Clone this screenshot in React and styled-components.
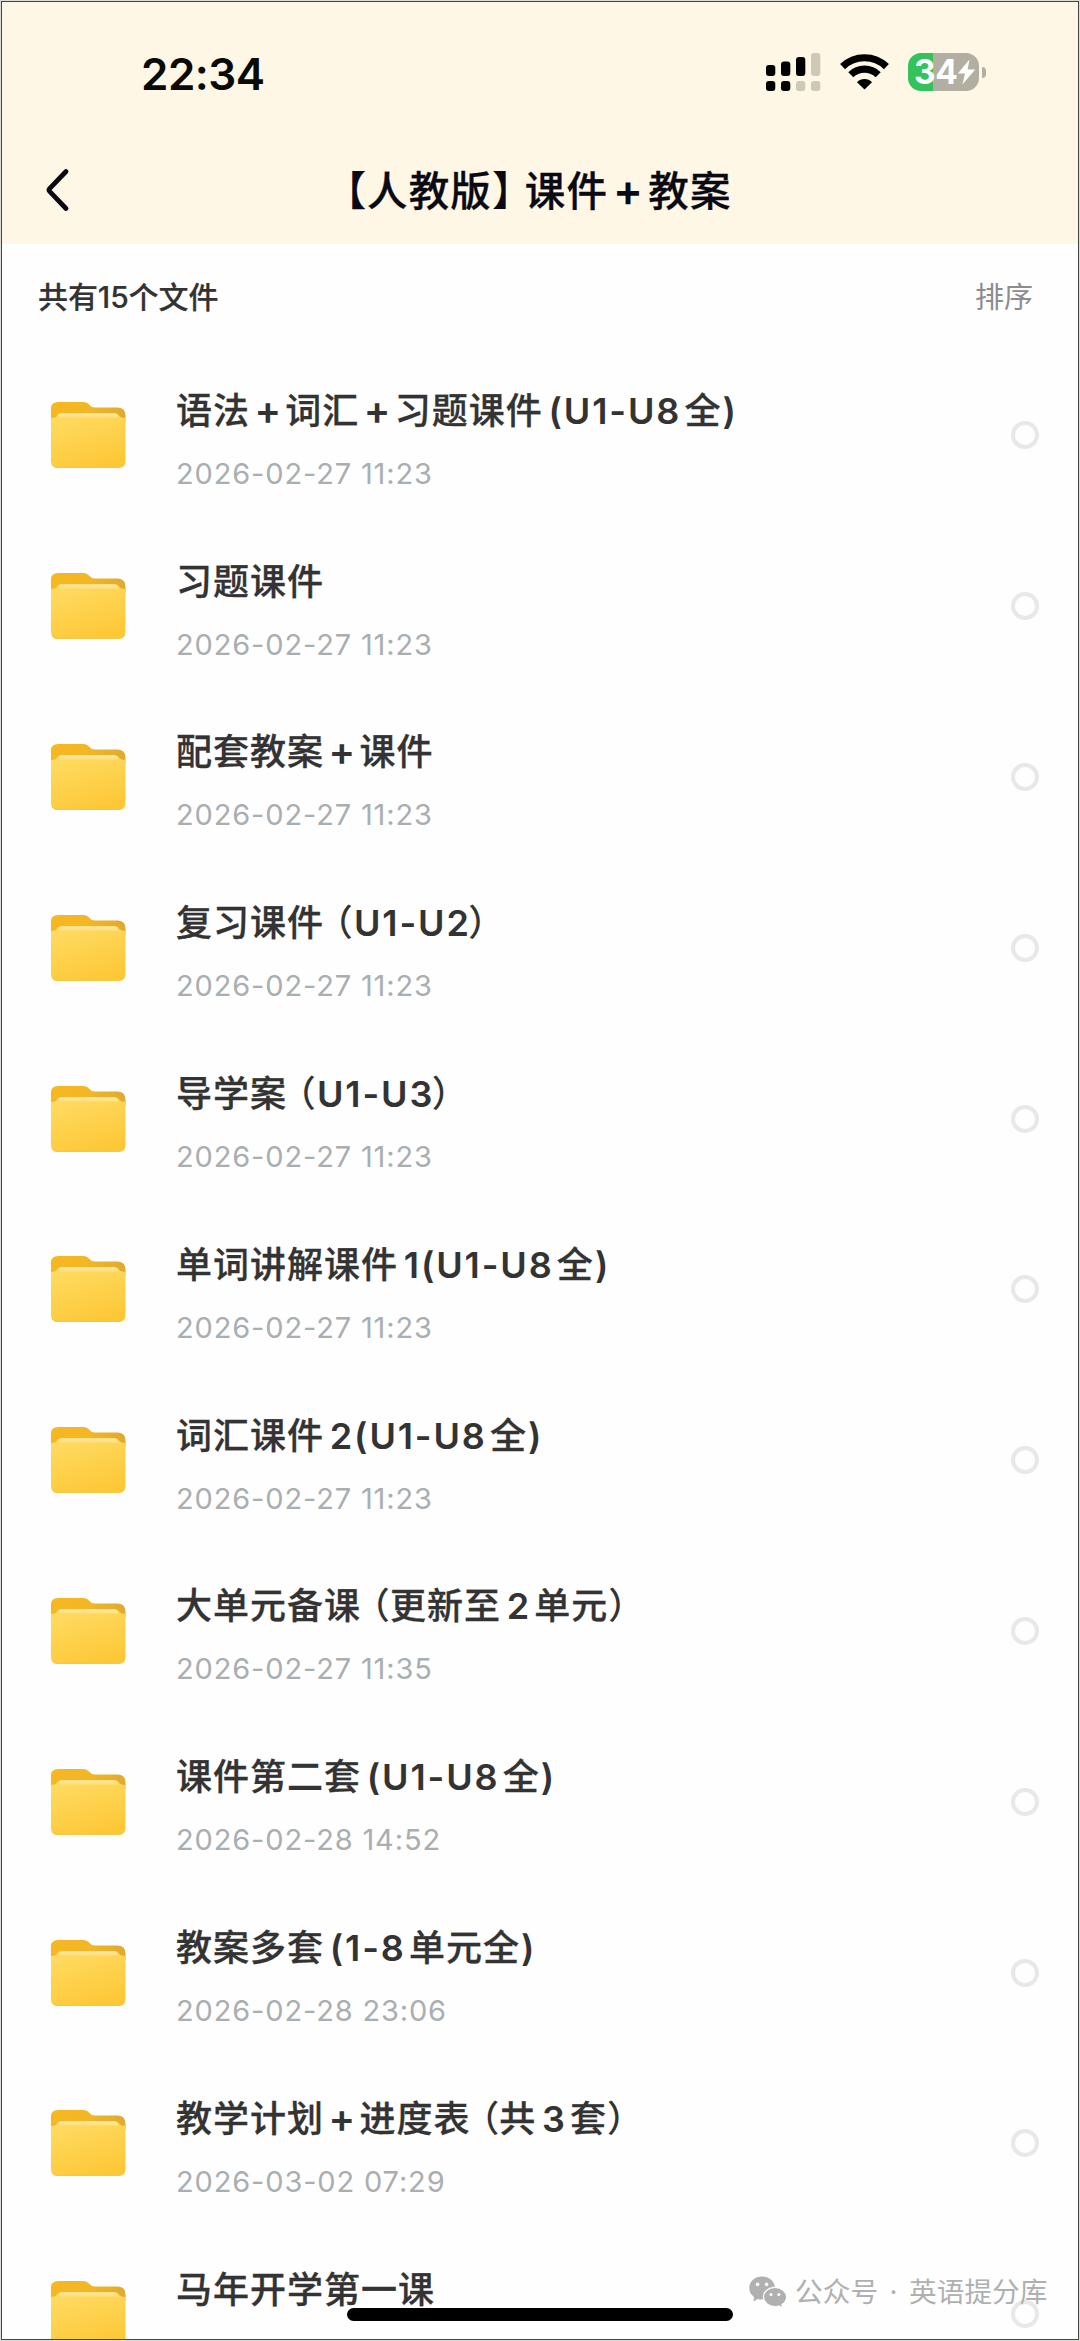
import React from "react";
import styled, { createGlobalStyle, css } from "styled-components";

const GlobalStyle = createGlobalStyle`
  * { box-sizing: border-box; }
  body { margin: 0; background: #dcdad0; }
`;

const cjk = `"Noto Sans CJK SC", sans-serif`;
const latin = `Inter, "Noto Sans CJK SC", sans-serif`;

const Screen = styled.div`
  position: relative;
  width: 1080px;
  height: 2341px;
  padding: 1px;
  overflow: hidden;
  background: #dcdcd8;
`;

const Frame = styled.main`
  display: flex;
  flex-direction: column;
  width: 1078px;
  height: 2339px;
  overflow: hidden;
  border: 1px solid #45453f;
  background: #fefefe;
  font-family: ${latin};
`;

const Header = styled.header`
  flex: none;
  height: 242px;
  background: #fff7e5;
`;

const StatusBar = styled.div`
  display: flex;
  align-items: center;
  justify-content: space-between;
  height: 140px;
  padding: 0 92px 0 139px;
`;

const Clock = styled.time`
  padding-top: 3px;
  font-size: 44px;
  font-weight: 600;
  line-height: 50px;
  letter-spacing: -0.5px;
  color: #0a0a06;
`;

const StatusIcons = styled.div`
  display: flex;
  align-items: center;
  gap: 19px;
`;

const Battery = styled.div`
  display: flex;
  align-items: center;
  gap: 3px;
`;

const BatteryBody = styled.div`
  display: flex;
  align-items: center;
  width: 71px;
  height: 38px;
  padding-left: 6px;
  border-radius: 13px;
  background: linear-gradient(90deg, #34c25c 0 25px, #b2afa2 25px);
  color: #fff;
  font-size: 33.5px;
  font-weight: 700;
  line-height: 38px;
  letter-spacing: -0.4px;
`;

const BatteryTip = styled.div`
  width: 4px;
  height: 11px;
  border-radius: 0 5px 5px 0;
  background: #b2afa2;
`;

const NavBar = styled.nav`
  display: grid;
  grid-template-columns: 110px 1fr 133px;
  align-items: center;
  height: 96px;
`;

const BackButton = styled.button`
  display: flex;
  width: 34px;
  margin-left: 39px;
  padding: 0;
  border: 0;
  background: none;
`;

const Heading = styled.h1`
  display: flex;
  align-items: baseline;
  justify-content: center;
  margin: 0;
  padding-bottom: 2px;
  font-size: 40.5px;
  font-weight: 500;
  line-height: 56px;
  letter-spacing: 0.01em;
  color: #0a0a14;
`;

const Summary = styled.div`
  display: flex;
  align-items: center;
  justify-content: space-between;
  flex: none;
  height: 106px;
  padding: 0 45px 4px 36px;
`;

const Count = styled.span`
  font-family: ${latin};
  font-size: 30px;
  font-weight: 500;
  letter-spacing: -0.1px;
  color: #333;
  -webkit-text-stroke: 0.2px #333;
`;

const Sort = styled.button`
  padding: 0;
  border: 0;
  background: none;
  font-family: ${cjk};
  font-size: 29px;
  line-height: 42px;
  color: #8c8c8c;
`;

const List = styled.ul`
  flex: none;
  margin: 0;
  padding: 0;
  list-style: none;
`;

const Row = styled.li`
  display: grid;
  grid-template-columns: 127px 1fr 28px;
  align-items: center;
  height: 170.8px;
  padding: 0 39px 0 47px;
`;

const Info = styled.div`
  display: flex;
  flex-direction: column;
  padding-top: 2px;
`;

const Name = styled.div`
  display: flex;
  align-items: baseline;
  height: 54px;
  font-size: 36px;
  font-weight: 500;
  line-height: 54px;
  white-space: pre;
  color: #333;
`;

const Stamp = styled.time`
  height: 36px;
  margin-top: 21px;
  font-size: 29px;
  font-weight: 400;
  line-height: 36px;
  letter-spacing: 0.85px;
  white-space: pre;
  color: #a9aeb1;
`;

const partStyles = {
  han: css`
    font-family: ${cjk};
    letter-spacing: 0.028em;
    -webkit-text-stroke: 0.3px currentColor;
  `,
  latin: css`
    font-family: ${latin};
    font-weight: 600;
    letter-spacing: 0.052em;
    margin-left: ${(p) => (p.$tightStart ? "0.03em" : "0.16em")};
    margin-right: ${(p) => (p.$tightEnd ? "-0.07em" : "0.09em")};
  `,
  plus: css`
    font-family: ${latin};
    font-size: 1.1em;
    font-weight: 600;
    line-height: 1;
    margin: 0 0.11em;
  `,
  open: css`
    font-family: ${cjk};
    margin-left: -0.2em;
  `,
  close: css`
    font-family: ${cjk};
  `,
  bracket: css`
    font-family: ${cjk};
    margin-right: -0.2em;
  `,
};

const Part = styled.span`
  ${(p) => partStyles[p.$kind]}
`;

const Radio = styled.span`
  width: 28px;
  height: 28px;
  border: 4px solid #e8e8e8;
  border-radius: 50%;
`;

const HomeIndicator = styled.div`
  position: absolute;
  left: 347px;
  top: 2308px;
  width: 386px;
  height: 12.5px;
  border-radius: 7px;
  background: #000;
`;

const Watermark = styled.div`
  position: absolute;
  left: 749px;
  top: 2271px;
  display: flex;
  align-items: center;
  gap: 8px;
  height: 42px;
  font-family: ${latin};
  font-size: 27.7px;
  line-height: 42px;
  word-spacing: 3.7px;
  white-space: pre;
  color: #b0b0b0;
`;

function kindOf(text) {
  if (text === "+") return "plus";
  if (text === "（") return "open";
  if (text === "）") return "close";
  if (text === "】") return "bracket";
  return /^[\x20-\x7e]/.test(text) ? "latin" : "han";
}

function MixedText({ text }) {
  const parts = text.match(/\+|（|）|】|[\x20-\x2a\x2c-\x7e]+|[^\x20-\x7e（）】]+/g);
  return parts.map((part, i) => (
    <Part
      key={i}
      $kind={kindOf(part)}
      $tightStart={part === ")" || parts[i - 1] === "（"}
      $tightEnd={parts[i + 1] === "）"}
    >
      {part}
    </Part>
  ));
}

function Signal() {
  const bars = [
    [0, 12, 11, 1], [15, 8.5, 14.5, 1], [30, 4, 19, 1], [45, 0, 23, 0],
    [0, 28, 10, 1], [15, 28, 10, 1], [30, 28, 10, 0], [45, 28, 10, 0],
  ];
  return (
    <svg width="55" height="38" viewBox="0 0 55 38">
      {bars.map(([x, y, h, on], i) => (
        <rect key={i} x={x} y={y} width="9.3" height={h} rx="3" fill={on ? "#000" : "#cdc8b8"} />
      ))}
    </svg>
  );
}

function Wifi() {
  return (
    <svg width="49" height="36" viewBox="0 0 49 36">
      <g fill="none" stroke="#000" strokeWidth="7.2">
        <path d="M2.6 12.6 A31.5 31.5 0 0 1 46.4 12.6" />
        <path d="M10.8 20.8 A19.6 19.6 0 0 1 38.2 20.8" />
      </g>
      <path d="M24.5 35.6 L17 28.2 A10.6 10.6 0 0 1 32 28.2 Z" fill="#000" />
    </svg>
  );
}

function Bolt() {
  return (
    <svg width="19" height="26" viewBox="0 0 19 26">
      <path d="M12.5 0.5 L0.8 14.6 H8 L5.4 25.5 L18.2 10.4 H10.6 Z" fill="#fff" />
    </svg>
  );
}

function Folder() {
  return (
    <svg width="78" height="70" viewBox="0 0 78 70">
      <defs>
        <linearGradient id="back" x1="0" x2="1" y1="0" y2="0">
          <stop offset="0" stopColor="#f7b720" />
          <stop offset="0.5" stopColor="#f3b625" />
          <stop offset="1" stopColor="#dfaa30" />
        </linearGradient>
        <linearGradient id="front" x1="0.2" x2="0.6" y1="0" y2="1">
          <stop offset="0" stopColor="#ffdb63" />
          <stop offset="1" stopColor="#fdc836" />
        </linearGradient>
        <linearGradient id="lip" x1="0" x2="0" y1="0" y2="1">
          <stop offset="0" stopColor="#ffe9ad" />
          <stop offset="1" stopColor="#ffdb66" />
        </linearGradient>
      </defs>
      <path d="M2 20 V8.5 Q2 2 9 2 H34 Q38 2 40.5 5 Q42.5 7.5 46 7.5 H69 Q76.5 8 76.5 15.5 V22 H2 Z" fill="url(#back)" />
      <path d="M2 18 Q8 17.5 8 15.5 Q9 13 13 13 H65 Q69 13 70 15.5 Q71 17.5 76.5 18 V61 Q76.5 68 69.5 68 H8.5 Q2 68 2 61 Z" fill="url(#front)" />
      <path d="M9 18 Q8.5 13.5 13.5 13.5 H64.5 Q69 13.5 69.5 18 Z" fill="url(#lip)" />
      <path d="M4 65 Q6 67.3 9 67.3 H69 Q73 67.3 75 64.5" fill="none" stroke="#f3c74e" strokeWidth="1.2" />
    </svg>
  );
}

function WeChat() {
  return (
    <svg width="38" height="32" viewBox="0 0 38 32">
      <path d="M13 0.5 C5.8 0.5 0.3 5.4 0.3 12 C0.3 15.8 2.2 19 5.2 21.2 L4.2 25.6 L8.8 23 C10.1 23.4 11.6 23.6 13 23.6 C20 23.6 26 18.4 26 12 C26 5.4 20 0.5 13 0.5 Z" fill="#b0b0b0" />
      <path d="M26 11.4 C19.4 11.4 14.4 15.8 14.4 21 C14.4 26.4 19.4 30.6 26 30.6 C27.2 30.6 28.5 30.4 29.6 30 L33.8 32 L32.8 28.6 C35.8 26.8 37.6 24.2 37.6 21 C37.6 15.8 32.4 11.4 26 11.4 Z" fill="#b0b0b0" stroke="#fefefe" strokeWidth="1.2" />
      <g fill="#fefefe">
        <circle cx="8.6" cy="8.4" r="1.8" />
        <circle cx="17.6" cy="8.4" r="1.8" />
        <circle cx="22" cy="18.4" r="1.5" />
        <circle cx="29.8" cy="18.4" r="1.5" />
      </g>
    </svg>
  );
}

const files = [
  ["语法+词汇+习题课件(U1-U8全)", "2026-02-27 11:23"],
  ["习题课件", "2026-02-27 11:23"],
  ["配套教案+课件", "2026-02-27 11:23"],
  ["复习课件（U1-U2）", "2026-02-27 11:23"],
  ["导学案（U1-U3）", "2026-02-27 11:23"],
  ["单词讲解课件1(U1-U8全)", "2026-02-27 11:23"],
  ["词汇课件2(U1-U8全)", "2026-02-27 11:23"],
  ["大单元备课（更新至2单元）", "2026-02-27 11:35"],
  ["课件第二套(U1-U8全)", "2026-02-28 14:52"],
  ["教案多套(1-8单元全)", "2026-02-28 23:06"],
  ["教学计划+进度表（共3套）", "2026-03-02 07:29"],
  ["马年开学第一课", ""],
];

export default function App() {
  return (
    <Screen>
      <GlobalStyle />
      <Frame>
        <Header>
          <StatusBar>
            <Clock>22:34</Clock>
            <StatusIcons>
              <Signal />
              <Wifi />
              <Battery>
                <BatteryBody>34<Bolt /></BatteryBody>
                <BatteryTip />
              </Battery>
            </StatusIcons>
          </StatusBar>
          <NavBar>
            <BackButton aria-label="返回">
              <svg width="34" height="48" viewBox="0 0 34 48">
                <path d="M25 5.5 L8.6 22.6 Q7.2 24 8.6 25.4 L25 42.5" fill="none" stroke="#0a0a14" strokeWidth="4.8" strokeLinecap="round" strokeLinejoin="round" />
              </svg>
            </BackButton>
            <Heading><MixedText text="【人教版】课件+教案" /></Heading>
          </NavBar>
        </Header>
        <Summary>
          <Count>共有15个文件</Count>
          <Sort>排序</Sort>
        </Summary>
        <List>
          {files.map(([name, stamp]) => (
            <Row key={name}>
              <Folder />
              <Info>
                <Name><MixedText text={name} /></Name>
                <Stamp>{stamp}</Stamp>
              </Info>
              <Radio />
            </Row>
          ))}
        </List>
      </Frame>
      <HomeIndicator />
      <Watermark><WeChat /><span>公众号 · 英语提分库</span></Watermark>
    </Screen>
  );
}
